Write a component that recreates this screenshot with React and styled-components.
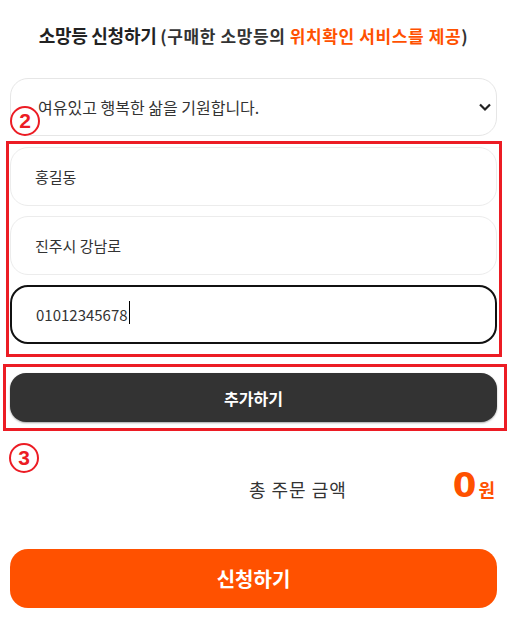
import React from 'react';
import styled, { createGlobalStyle } from 'styled-components';

const GlobalStyle = createGlobalStyle`
  body {
    margin: 0;
    background: #fff;
    font-family: "Noto Sans CJK KR", "Noto Sans", sans-serif;
    color: #333;
  }
`;

const Page = styled.div`
  position: relative;
  width: 487px;
  margin-left: 10px;
  padding-top: 21px;
`;

const Title = styled.h2`
  margin: 0;
  text-align: center;
  font-size: 18px;
  line-height: 28px;
  font-weight: 700;
  color: #222;
  letter-spacing: -0.3px;
`;

const Sub = styled.span`
  font-size: 17px;
  letter-spacing: 0.6px;
  color: ${p => (p.$accent ? '#ff5100' : '#333')};
`;

const SelectBox = styled.div`
  position: relative;
  margin-top: 28px;
`;

const Select = styled.select`
  appearance: none;
  width: 100%;
  height: 58px;
  padding: 0 40px 0 27px;
  border: 1px solid #e6e6e6;
  border-radius: 18px;
  background: #fff;
  font-family: inherit;
  font-size: 16px;
  color: #333;
  outline: none;
`;

const Chevron = styled.svg`
  position: absolute;
  right: 5px;
  top: 24px;
  pointer-events: none;
`;

const Marked = styled.div`
  position: relative;
  display: flex;
  flex-direction: column;
  gap: ${p => p.$gap || 0}px;
  border: 3px solid #ec1c24;
  margin: ${p => p.$margin};
  padding: ${p => p.$padding};
`;

const Field = styled.input`
  box-sizing: border-box;
  width: 100%;
  height: 59px;
  padding: 0 24px;
  border: ${p => (p.$active ? '2px solid #111' : '1px solid #ececec')};
  border-radius: 18px;
  background: #fff;
  font-family: inherit;
  font-size: 15px;
  color: #333;
  outline: none;
  caret-color: transparent;
`;

const Caret = styled.span`
  position: absolute;
  left: 120px;
  top: 157px;
  width: 1px;
  height: 23px;
  background: #000;
`;

const DarkButton = styled.button`
  height: 49px;
  border: none;
  border-radius: 16px;
  background: #333;
  color: #fff;
  font-family: inherit;
  font-size: 16px;
  font-weight: 700;
  box-shadow: 0 1px 2px rgba(0, 0, 0, 0.35);
`;

const Mark = styled.span`
  position: absolute;
  left: ${p => p.$left}px;
  top: ${p => p.$top}px;
  box-sizing: border-box;
  width: 30px;
  height: 30px;
  border: 2px solid #ec1c24;
  border-radius: 50%;
  display: flex;
  align-items: center;
  justify-content: center;
  font-family: "Liberation Sans", Arial, sans-serif;
  font-size: 21px;
  font-weight: 700;
  color: #ec1c24;
  background: rgba(255, 255, 255, 0.6);
`;

const TotalRow = styled.div`
  display: flex;
  justify-content: flex-end;
  align-items: baseline;
  margin-top: 37px;
  padding-right: 2px;
`;

const TotalLabel = styled.span`
  font-size: 18px;
  color: #333;
  margin-right: 106px;
  letter-spacing: 1px;
`;

const Amount = styled.span`
  font-family: "DejaVu Sans", sans-serif;
  font-size: 34px;
  font-weight: 700;
  color: #ff5100;
  line-height: 1;
`;

const Won = styled.span`
  font-size: 18px;
  font-weight: 700;
  color: #ff5100;
  margin-left: 2px;
`;

const SubmitButton = styled.button`
  width: 100%;
  height: 59px;
  margin-top: 47px;
  border: none;
  border-radius: 18px;
  background: #ff5100;
  color: #fff;
  font-family: inherit;
  font-size: 20px;
  font-weight: 700;
`;

export default function App() {
  return (
    <>
      <GlobalStyle />
      <Page>
        <Title>
          소망등 신청하기{' '}
          <Sub>(구매한 소망등의 </Sub>
          <Sub $accent>위치확인 서비스를 제공</Sub>
          <Sub>)</Sub>
        </Title>

        <SelectBox>
          <Select defaultValue="wish">
            <option value="wish">여유있고 행복한 삶을 기원합니다.</option>
          </Select>
          <Chevron width="14" height="10" viewBox="0 0 14 10">
            <path d="M2 2.5 L7 7.5 L12 2.5" fill="none" stroke="#222" strokeWidth="2.2" />
          </Chevron>
        </SelectBox>

        <Marked $gap={10} $margin="5px -5px 0 -4px" $padding="3px 2px 10px 1px">
          <Field defaultValue="홍길동" />
          <Field defaultValue="진주시 강남로" />
          <Field $active defaultValue="01012345678" />
          <Caret />
        </Marked>

        <Marked $margin="7px -10px 0 -7px" $padding="6px 7px 6px 4px">
          <DarkButton>추가하기</DarkButton>
        </Marked>

        <TotalRow>
          <TotalLabel>총 주문 금액</TotalLabel>
          <Amount>0</Amount>
          <Won>원</Won>
        </TotalRow>

        <SubmitButton>신청하기</SubmitButton>

        <Mark $left={0} $top={106}>2</Mark>
        <Mark $left={-1} $top={443}>3</Mark>
      </Page>
    </>
  );
}
